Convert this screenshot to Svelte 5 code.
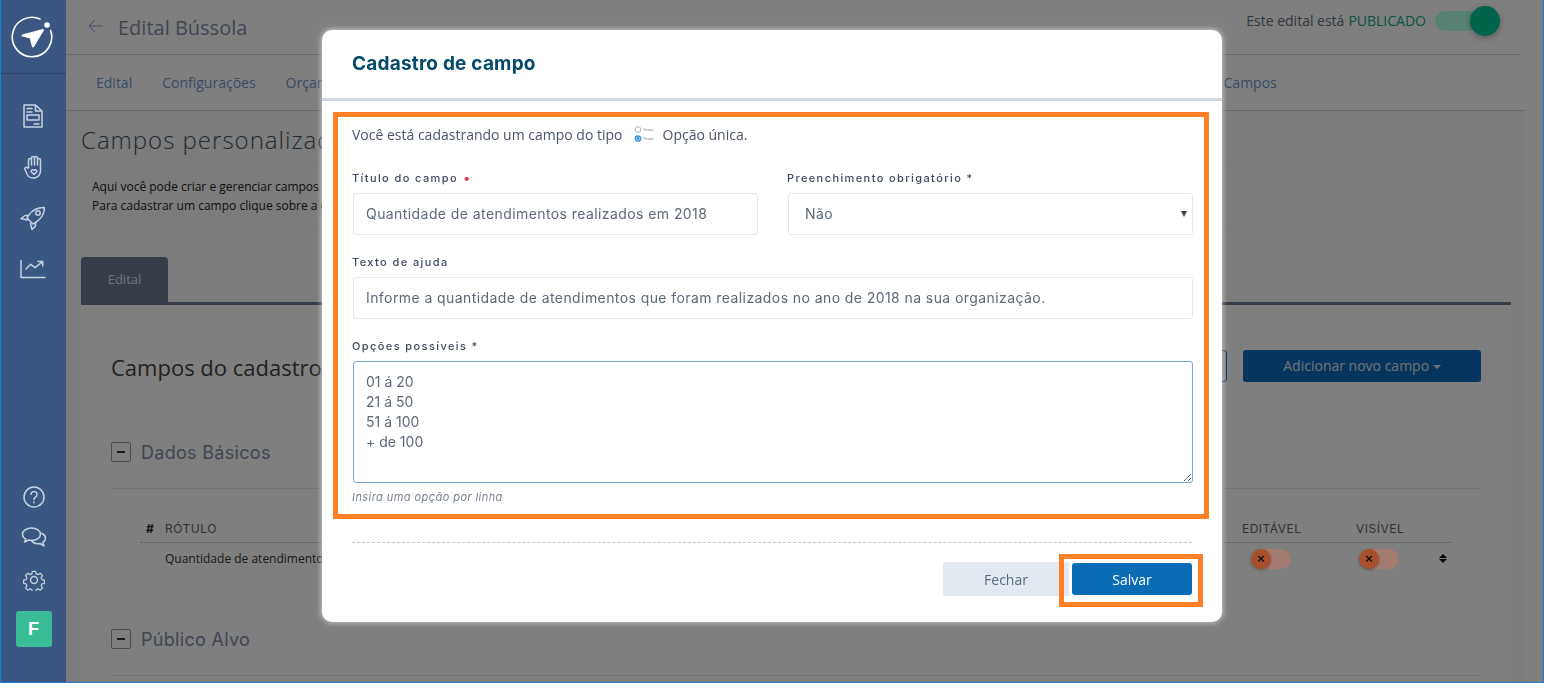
<script lang="ts">
	const mainTabs = ['Edital', 'Configurações', 'Orçamento', 'Campos'];
	const options = '01 á 20\n21 á 50\n51 á 100\n+ de 100';
	let title = $state('Quantidade de atendimentos realizados em 2018');
	let help = $state('Informe a quantidade de atendimentos que foram realizados no ano de 2018 na sua organização.');
	let choices = $state(options);
</script>

<div class="page">
	<aside class="sidebar">
		<div class="brand">
			<svg width="42" height="42" viewBox="0 0 42 42" fill="none">
				<path d="M39.6 14.500A19.700 19.700 0 1 1 29 3" stroke="#fff" stroke-width="1.6" stroke-linecap="round" />
				<circle cx="36" cy="9" r="2.800" fill="#fff" />
				<path d="M32 14 11.500 19.500l8 2 2.500 9z" fill="#fff" stroke="#fff" stroke-width="2" stroke-linejoin="round" />
			</svg>
		</div>
		<nav class="nav-top">
			<svg class="ico" viewBox="0 0 20 24" width="20" height="24">
				<path d="M1 1h11.500l6.500 6v16H1zM12.500 1v6H19M4 4.500h5M4 8h5M4 11h12v5H4zM11 20h5" />
			</svg>
			<svg class="ico" viewBox="0 0 19 24" width="20" height="24">
				<path d="M5 13V5a1.500 1.500 0 0 1 3 0V3a1.500 1.500 0 0 1 3 0v0a1.500 1.500 0 0 1 3 0v2a1.500 1.500 0 0 1 3 0v11c0 4-3 7-7 7-3 0-5-1-6-3l-2.500-5.500c-1-1.500 1-3 2.200-1.800zM8 5v5M11 3v7M14 3v7" />
				<path d="M10.500 19.500l-2.800-2.800a1.600 1.600 0 0 1 2.800-1.400 1.600 1.600 0 0 1 2.800 1.400z" />
			</svg>
			<svg class="ico" viewBox="0 0 25 24" width="25" height="24">
				<path d="M24.500 1.500C18 1.500 12 4 8.500 9.500L7 12l6 6 2.500-1.500C21 13 24.500 8 24.500 1.500zM8.500 9.500H5L1 12.500 7 14M15.500 16.500V20L12 23.500 10.500 17.500" />
				<circle cx="18" cy="7" r="2.200" />
			</svg>
			<svg class="ico chart" viewBox="0 0 26 19" width="26" height="19">
				<path d="M1 .5v17h24M6 9l4.700-4.700L15 7.700l7.700-6M18 1.500h4.700V6" />
			</svg>
		</nav>
		<nav class="nav-bottom">
			<svg class="ico help" viewBox="0 0 22 22" width="22" height="22">
				<circle cx="11" cy="11" r="10" />
				<path d="M8 8.500a3 3 0 1 1 4.500 2.600c-1 .6-1.500 1.200-1.500 2.400M11 16v.8" />
			</svg>
			<svg class="ico" viewBox="0 0 26 22" width="26" height="22">
				<path d="M10.500 2C5.500 2 1.500 4.700 1.500 8.200c0 2 1.300 3.700 3.300 4.800L3.500 16l4-2c1 .2 2 .4 3 .4 5 0 9-2.700 9-6.200S15.500 2 10.500 2z" />
				<path d="M21 7.500c2.200 1 3.500 2.700 3.500 4.700 0 1.800-1 3.300-2.700 4.300l1.200 3.500-4-2.500c-3.500.5-7-.6-8.500-3" />
			</svg>
			<svg class="ico gear" viewBox="0 0 24 24" width="22" height="22">
				<path d="M10 1.500h4l.6 3 2.300 1 2.600-1.700 2.800 2.800-1.700 2.600 1 2.300 3 .6v4l-3 .6-1 2.300 1.700 2.600-2.800 2.800-2.600-1.700-2.300 1-.6 3h-4l-.6-3-2.300-1-2.600 1.700-2.800-2.800 1.700-2.600-1-2.300-3-.6v-4l3-.6 1-2.300L1.700 6.600l2.800-2.800 2.600 1.700 2.300-1z" transform="translate(1.200 1.200) scale(.9)" />
				<circle cx="12" cy="12" r="3.800" />
			</svg>
			<div class="avatar">F</div>
		</nav>
	</aside>

	<main class="main">
		<header class="topbar">
			<svg class="back" width="16" height="14" viewBox="0 0 16 14" fill="none">
				<path d="M15 7H1.500M7 1 1 7l6 6" stroke="currentColor" />
			</svg>
			<h1>Edital Bússola</h1>
			<div class="status">
				Este edital está <span class="published">PUBLICADO</span>
				<span class="switch"><span class="knob"></span></span>
			</div>
		</header>
		<div class="main-tabs">
			{#each mainTabs as tab}
				<a class:last={tab === 'Campos'} href="#top">{tab}</a>
			{/each}
		</div>

		<section class="content">
			<h2>Campos personalizados</h2>
			<div class="info">
				<p>Aqui você pode criar e gerenciar campos personalizados para o cadastro deste edital.</p>
				<p>Para cadastrar um campo clique sobre a opção desejada no botão adicionar novo campo.</p>
			</div>
			<div class="tab-row"><span class="tab">Edital</span></div>
			<div class="panel">
				<div class="panel-head">
					<h3>Campos do cadastro</h3>
					<button class="ghost">Ordenar</button>
					<button class="primary">Adicionar novo campo <i class="caret"></i></button>
				</div>
				<div class="group">
					<span class="minus"></span>
					<h4>Dados Básicos</h4>
				</div>
				<div class="table">
					<div class="thead">
						<b>#</b>
						<span class="col-label">RÓTULO</span>
						<span class="col-edit">EDITÁVEL</span>
						<span class="col-vis">VISÍVEL</span>
					</div>
					<div class="trow">
						<span class="col-label">Quantidade de atendimentos realizados em 2018</span>
						<span class="col-edit"><span class="off"><span class="off-knob">×</span></span></span>
						<span class="col-vis"><span class="off"><span class="off-knob">×</span></span></span>
						<span class="sort"><i></i><i></i></span>
					</div>
				</div>
				<div class="group second">
					<span class="minus"></span>
					<h4>Público Alvo</h4>
				</div>
			</div>
		</section>
	</main>

	<div class="backdrop"></div>

	<div class="modal">
		<div class="modal-head"><h5>Cadastro de campo</h5></div>
		<form class="modal-body">
			<p class="intro">
				Você está cadastrando um campo do tipo
				<svg width="22" height="18" viewBox="0 0 22 18">
					<circle cx="4" cy="4.500" r="2.800" fill="#fff" stroke="#a9b0b8" />
					<circle cx="4" cy="13.500" r="2.600" fill="#fff" stroke="#3d97dc" stroke-width="1.500" />
					<circle cx="4" cy="13.500" r="1.400" fill="#3d97dc" />
					<text x="9" y="6" class="tiny">Texto</text>
					<text x="9" y="15" class="tiny">Texto</text>
				</svg>
				Opção única.
			</p>
			<div class="cols">
				<div class="field">
					<div class="lbl"><label for="f-title">Título do campo</label><em>•</em></div>
					<input id="f-title" bind:value={title} />
				</div>
				<div class="field">
					<div class="lbl"><label for="f-required">Preenchimento obrigatório *</label></div>
					<div class="select-wrap">
						<select id="f-required"><option>Não</option><option>Sim</option></select>
					</div>
				</div>
			</div>
			<div class="field">
				<div class="lbl"><label for="f-help">Texto de ajuda</label></div>
				<input id="f-help" bind:value={help} />
			</div>
			<div class="field">
				<div class="lbl"><label for="f-options">Opções possíveis *</label></div>
				<textarea id="f-options" bind:value={choices}></textarea>
			</div>
			<small>Insira uma opção por linha</small>
			<div class="actions">
				<button type="button" class="close">Fechar</button>
				<button type="button" class="save">Salvar</button>
			</div>
		</form>
		<div class="mark mark-form"></div>
		<div class="mark mark-save"></div>
	</div>

	<div class="frame"></div>
</div>

<style>
	:global(body) {
		margin: 0;
		overflow: hidden;
	}

	.page {
		display: flex;
		height: 683px;
		overflow: hidden;
		box-sizing: border-box;
		font-family: 'Open Sans', 'Liberation Sans', sans-serif;
		background: #fff;
		color: #444;
	}

	/* sidebar stays above the backdrop */
	.sidebar {
		position: relative;
		z-index: 20;
		flex: 0 0 66px;
		box-sizing: border-box;
		height: 683px;
		display: flex;
		flex-direction: column;
		align-items: center;
		background: #3a5682;
		border-left: 1px solid #1b7fd6;
	}

	.frame {
		position: fixed;
		inset: 0;
		z-index: 40;
		border: solid #1b7fd6;
		border-width: 0 1px 1px 0;
		pointer-events: none;
	}

	.brand {
		width: 100%;
		height: 74px;
		box-sizing: border-box;
		border-bottom: 1px solid #2d4468;
		display: flex;
		justify-content: center;
		align-items: center;
		padding-right: 3px;
	}

	.nav-top,
	.nav-bottom {
		display: flex;
		flex-direction: column;
		align-items: center;
	}

	.nav-top {
		gap: 27px;
		padding-top: 30px;
		padding-right: 2px;
	}

	.chart {
		margin-top: 3px;
	}

	.nav-bottom {
		margin-top: auto;
		gap: 20px;
		padding-bottom: 36px;
	}

	.help {
		margin-bottom: -2px;
	}

	.gear {
		margin-top: 1px;
	}

	.ico {
		fill: none;
		stroke: #c6d1e0;
		stroke-width: 1.5;
		stroke-linejoin: round;
		stroke-linecap: round;
	}

	.avatar {
		width: 36px;
		height: 36px;
		border-radius: 3px;
		background: #3abd96;
		color: #fff;
		font: 700 18px/36px 'Liberation Sans', sans-serif;
		text-align: center;
	}

	.main {
		flex: 1;
		min-width: 0;
	}

	.topbar {
		height: 55px;
		width: 1454px;
		box-sizing: border-box;
		display: flex;
		align-items: center;
		padding: 0 36px 0 22px;
		border-bottom: 1px solid #c9d6e0;
		color: #7e94b6;
	}

	.back {
		margin-right: 14px;
		margin-top: -3px;
		color: #8ba4c8;
	}

	h1 {
		margin: 0;
		font-size: 20px;
		font-weight: 400;
		color: #7e8ea5;
	}

	.status {
		margin-left: auto;
		margin-right: -1px;
		display: flex;
		align-items: center;
		gap: 4px;
		font-size: 14px;
		color: #666f7c;
		padding-bottom: 13px;
	}

	.published {
		color: #10a585;
	}

	.switch {
		position: relative;
		z-index: 15;
		width: 50px;
		height: 20px;
		margin-left: 5px;
		border-radius: 10px;
		background: #5a8274;
	}

	.knob {
		position: absolute;
		right: -15px;
		top: -5px;
		width: 30px;
		height: 30px;
		border-radius: 50%;
		background: #00644c;
		box-shadow: 0 2px 6px rgba(0, 0, 0, 0.3);
	}

	.main-tabs {
		display: flex;
		height: 56px;
		box-sizing: border-box;
		align-items: center;
		padding: 0 0 1px 30px;
		gap: 30px;
		border-bottom: 1px solid #c9d6e0;
		width: 1459px;
	}

	.main-tabs a {
		font-size: 14px;
		color: #7097c8;
		text-decoration: none;
	}

	.main-tabs a.last {
		margin-left: 834px;
	}

	.content {
		padding: 14px 14px 0 15px;
		width: 1430px;
		background: #f8f8f8;
		height: 572px;
	}

	h2 {
		margin: 0;
		font-size: 24px;
		font-weight: 300;
		line-height: 30px;
		letter-spacing: 1px;
		color: #3f5567;
	}

	.info {
		margin-top: 12px;
		height: 60px;
		box-sizing: border-box;
		padding: 9px 10px;
		border: 1px solid #f0f0f0;
		border-radius: 4px;
		font-size: 12px;
		line-height: 19px;
		color: #222;
	}

	.info p {
		margin: 0;
	}

	.tab-row {
		margin-top: 30px;
		height: 45px;
		border-bottom: 3px solid #6a7a90;
	}

	.tab {
		display: inline-block;
		width: 87px;
		height: 45px;
		line-height: 45px;
		text-align: center;
		font-size: 13px;
		color: #dde2ea;
		background: #6a7a90;
		border-radius: 4px 4px 0 0;
	}

	.panel {
		background: #fff;
		padding: 0 30px;
		height: 400px;
	}

	.panel-head {
		display: flex;
		align-items: center;
		height: 32px;
		padding-top: 45px;
	}

	h3 {
		margin: 2px 0 0;
		font-size: 22px;
		font-weight: 400;
		color: #444;
	}

	.ghost {
		margin-left: auto;
		width: 120px;
		height: 32px;
		border: 1px solid #0c6cbe;
		border-radius: 3px;
		background: #fff;
	}

	.primary {
		margin-left: 16px;
		width: 238px;
		height: 32px;
		padding-bottom: 3px;
		border: 0;
		border-radius: 3px;
		background: #0c6cbe;
		color: #dfe8f0;
		font: 14px 'Open Sans', sans-serif;
	}

	.caret {
		display: inline-block;
		margin-bottom: 2px;
		border: 4px solid transparent;
		border-top-color: currentColor;
		border-bottom: 0;
	}

	.group {
		display: flex;
		align-items: center;
		gap: 10px;
		height: 20px;
		margin-top: 60px;
		padding-bottom: 26px;
		border-bottom: 1px solid #e4e4e4;
	}

	.group.second {
		margin-top: 0;
	}

	.minus {
		position: relative;
		width: 18px;
		height: 18px;
		border: 1px solid #9a9a9a;
		border-radius: 2px;
	}

	.minus::after {
		content: '';
		position: absolute;
		left: 5px;
		top: 8px;
		width: 8px;
		height: 2px;
		background: #333;
	}

	h4 {
		margin: 0;
		font: 400 18px 'Inter', sans-serif;
		color: #7e8ea5;
		letter-spacing: 0.3px;
	}

	.table {
		margin: 27px 30px 0;
		height: 113px;
		font-size: 12px;
		color: #333;
	}

	.thead,
	.trow {
		display: flex;
		align-items: center;
	}

	.thead {
		height: 24px;
		padding-bottom: 2px;
		border-bottom: 1px dotted #aaa;
		font-family: 'Inter', sans-serif;
		color: #666;
		letter-spacing: 0.5px;
	}

	.thead b {
		margin-left: 5px;
		width: 19px;
		color: #222;
	}

	.trow {
		height: 30px;
		padding-left: 24px;
	}

	.col-label {
		flex: 0 0 1077px;
		white-space: nowrap;
	}

	.col-edit {
		flex: 0 0 114px;
	}

	.col-vis {
		flex: 0 0 70px;
	}

	.trow .col-edit {
		padding-left: 9px;
		box-sizing: border-box;
	}

	.trow .col-vis {
		padding-left: 3px;
		box-sizing: border-box;
	}

	/* the toggles show through the backdrop in the reference */
	.off {
		position: relative;
		z-index: 15;
		display: block;
		width: 40px;
		height: 20px;
		margin-top: 2px;
		border-radius: 10px;
		background: #a37b70;
	}

	.off-knob {
		display: block;
		width: 20px;
		height: 20px;
		border-radius: 50%;
		background: #a8502e;
		box-shadow: 0 1px 3px rgba(0, 0, 0, 0.3);
		color: #111;
		font: 700 13px/20px 'Liberation Sans', sans-serif;
		text-align: center;
	}

	.sort {
		display: flex;
		flex-direction: column;
		gap: 1px;
		margin-left: 13px;
	}

	.sort i {
		border: 4px solid transparent;
		border-top: 0;
		border-bottom: 4px solid #111;
	}

	.sort i:last-child {
		transform: scaleY(-1);
	}

	.backdrop {
		position: fixed;
		inset: 0;
		z-index: 10;
		background: rgba(0, 0, 0, 0.5);
	}

	.modal {
		position: fixed;
		z-index: 30;
		left: 322px;
		top: 30px;
		width: 900px;
		height: 592px;
		border-radius: 10px;
		background: #fff;
		box-shadow: 0 0 5px 1px rgba(255, 255, 255, 0.55);
	}

	.modal-head {
		height: 71px;
		box-sizing: border-box;
		padding: 22px 30px 0;
		border-bottom: 3px solid #cfd6e0;
	}

	h5 {
		margin: 0;
		font: 700 19px/24px 'Inter', sans-serif;
		letter-spacing: 0.2px;
		color: #054a6b;
	}

	.modal-body {
		display: flex;
		flex-direction: column;
		padding: 24px 30px 0;
	}

	.intro {
		margin: 0;
		display: flex;
		align-items: center;
		gap: 7px;
		height: 18px;
		font-size: 14px;
		color: #4a5564;
	}

	.intro svg {
		margin: 0 0 0 4px;
	}

	.tiny {
		font: 600 4px 'Open Sans', sans-serif;
		fill: #8a8f96;
	}

	.cols {
		display: grid;
		grid-template-columns: 406px 406px;
		gap: 29px;
		margin-top: 27px;
	}

	.field {
		display: flex;
		flex-direction: column;
		margin-bottom: 19px;
	}

	.lbl {
		display: flex;
		gap: 5px;
		height: 17px;
		font: 500 11px/16px 'Inter', sans-serif;
		letter-spacing: 1.4px;
		color: #3d4a5c;
		margin-bottom: 6px;
	}

	.lbl em {
		color: #e0424e;
		font-style: normal;
		font-size: 14px;
	}

	input,
	select,
	textarea {
		box-sizing: border-box;
		width: calc(100% - 1px);
		margin-left: 1px;
		border: 1px solid #e2e8f0;
		border-radius: 3px;
		background: #fff;
		color: #5e6978;
		font: 14px 'Inter', sans-serif;
		letter-spacing: 0.42px;
		outline: none;
	}

	.field > input,
	.field > textarea {
		width: 100%;
	}

	.cols .field > input {
		width: calc(100% - 1px);
	}

	input,
	select {
		height: 42px;
		padding: 0 12px 2px;
	}

	.select-wrap {
		position: relative;
	}

	.select-wrap select {
		display: block;
		appearance: none;
		padding-left: 16px;
	}

	.select-wrap::after {
		content: '';
		position: absolute;
		right: 6px;
		top: 18px;
		border: 3.5px solid transparent;
		border-top: 6px solid #444;
		border-bottom: 0;
		pointer-events: none;
	}

	textarea {
		height: 122px;
		padding: 10px 12px;
		line-height: 20px;
		border-color: #7ba7d6;
		letter-spacing: 0;
	}

	small {
		margin-top: -12px;
		font: italic 11px/14px 'Inter', sans-serif;
		color: #7a8491;
		letter-spacing: 0.43px;
	}

	.actions {
		display: flex;
		justify-content: flex-end;
		margin-top: 38px;
		padding-top: 19px;
		border-top: 1px dashed #bcc8dc;
	}

	.actions button {
		height: 34px;
		border: 0;
		border-radius: 3px;
		font: 14px 'Open Sans', sans-serif;
	}

	.close {
		width: 129px;
		background: #e3e9f1;
		color: #5a6b80;
		padding-right: 9px;
	}

	.actions .save {
		position: relative;
		width: 120px;
		height: 32px;
		margin-top: 1px;
		background: #0a6cb5;
		color: #fff;
		font-weight: 500;
		box-shadow: 0 0 0 3px #fff;
	}

	.mark {
		position: absolute;
		box-sizing: border-box;
		border: 5px solid #ff8025;
		pointer-events: none;
	}

	.mark-form {
		left: 11px;
		top: 82px;
		width: 876px;
		height: 407px;
	}

	.mark-save {
		left: 737px;
		top: 524px;
		width: 144px;
		height: 53px;
	}
</style>
